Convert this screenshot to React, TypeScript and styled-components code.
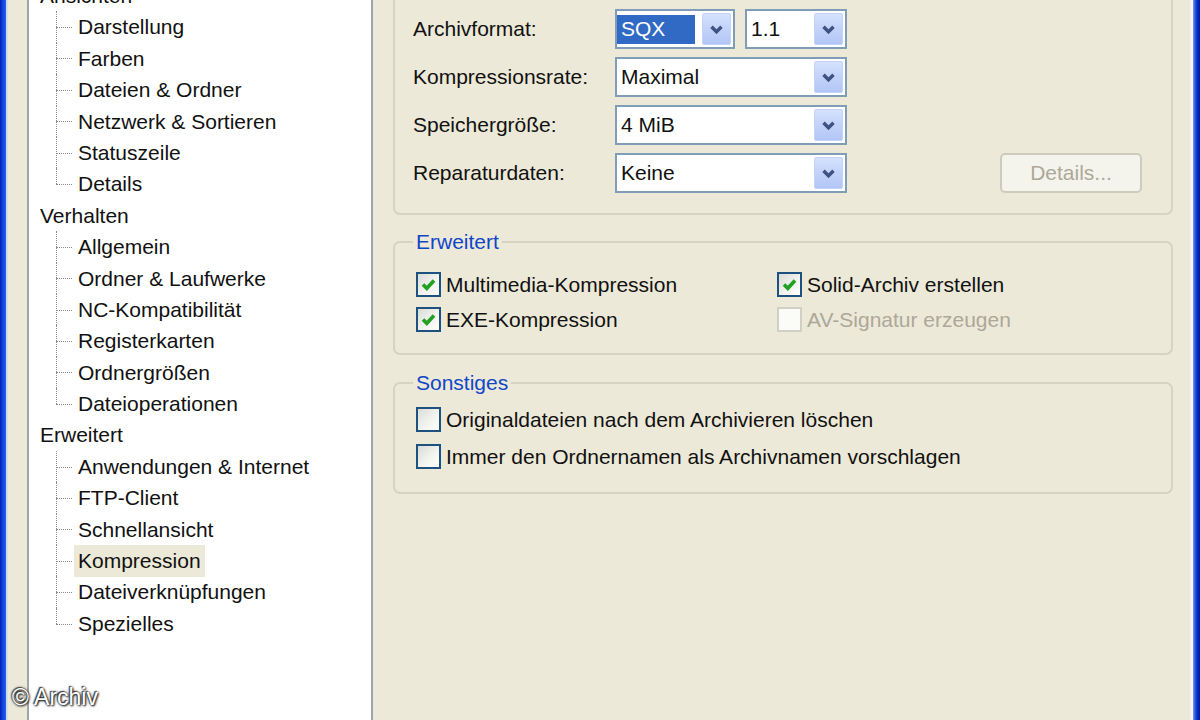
import React from "react";
import styled, { createGlobalStyle } from "styled-components";

const GlobalStyle = createGlobalStyle`
  html, body {
    margin: 0;
    padding: 0;
  }
  body {
    background: #ece9d8;
    font-family: "Liberation Sans", Arial, sans-serif;
  }
`;

const Window = styled.div`
  position: relative;
  display: flex;
  width: 1200px;
  height: 720px;
  overflow: hidden;
  background: #ece9d8;
  color: #111;
  font-size: 21px;
`;

const FrameEdge = styled.div<{ $side: "left" | "right" }>`
  flex: 0 0 ${(p) => (p.$side === "left" ? 8 : 10)}px;
  background: ${(p) =>
    p.$side === "left"
      ? "linear-gradient(to right, #0019b4 0, #0b3ad6 2px, #2462ea 6px, #c6d2f2 6px, #e2e2ea 8px)"
      : "linear-gradient(to right, #f3f1e4 0, #fbfaf4 3px, #7b9cf0 3px, #2a5ee6 5px, #0a30c8 7px, #001a98 10px)"};
`;

const TreeArea = styled.div`
  flex: 0 0 365px;
  box-sizing: border-box;
  padding-left: 19px;
  display: flex;
  flex-direction: column;
`;

const TreePanel = styled.div`
  flex: 1;
  width: 346px;
  box-sizing: border-box;
  margin: -10px 0;
  border: 2px solid #9ea5ad;
  background: #fff;
  overflow: hidden;
`;

const TreeList = styled.div`
  margin-top: -12px;
`;

const CategoryRow = styled.div`
  height: 31.4px;
  line-height: 31.4px;
  padding-left: 11px;
  white-space: nowrap;
`;

const ChildRow = styled.div<{ $last?: boolean }>`
  position: relative;
  height: 31.4px;
  line-height: 31.4px;
  padding-left: 45px;
  white-space: nowrap;

  &::before {
    content: "";
    position: absolute;
    left: 27px;
    top: 50%;
    width: 16px;
    border-top: 1px dotted #8a8a8a;
  }

  &::after {
    content: "";
    position: absolute;
    left: 27px;
    top: 0;
    height: ${(p) => (p.$last ? "50%" : "100%")};
    border-left: 1px dotted #8a8a8a;
  }
`;

const ChildLabel = styled.span<{ $selected?: boolean }>`
  display: inline-block;
  padding: 0 4px;
  line-height: 32px;
  background: ${(p) => (p.$selected ? "#ece9d8" : "transparent")};
`;

const Content = styled.div`
  flex: 1;
  box-sizing: border-box;
  padding: 0 17px 0 20px;
  display: flex;
  flex-direction: column;
`;

const Group = styled.fieldset<{ $mt: number }>`
  margin: ${(p) => p.$mt}px 0 0 0;
  padding: 0;
  min-width: 0;
  border: 2px solid #d6d3c4;
  border-radius: 7px;
`;

const Legend = styled.legend`
  margin-left: 18px;
  padding: 0 3px;
  color: #1046c8;
  font-size: 21px;
  line-height: 24px;
`;

const FormGrid = styled.div`
  display: grid;
  grid-template-columns: 202px 232px 1fr;
  grid-auto-rows: 40px;
  row-gap: 8px;
  align-items: center;
  padding: 27px 29px 20px 18px;
`;

const FieldLabel = styled.div`
  white-space: nowrap;
`;

const ComboPair = styled.div`
  display: flex;
  gap: 10px;
`;

const ComboBox = styled.div<{ $width: number }>`
  width: ${(p) => p.$width}px;
  height: 40px;
  box-sizing: border-box;
  display: flex;
  align-items: stretch;
  padding: 2px 2px 2px 0;
  border: 2px solid #7f9db9;
  background: #fff;
`;

const ComboValue = styled.div`
  flex: 1;
  display: flex;
  align-items: center;
  padding-left: 4px;
  white-space: nowrap;
`;

const SelectedValue = styled.span`
  display: inline-flex;
  align-items: center;
  width: 78px;
  height: 29px;
  box-sizing: border-box;
  margin-left: -4px;
  padding-left: 4px;
  background: #316ac5;
  color: #fff;
`;

const DropButton = styled.div`
  flex: 0 0 29px;
  box-sizing: border-box;
  display: flex;
  align-items: center;
  justify-content: center;
  border: 1px solid #c3d3fb;
  border-radius: 2px;
  background: linear-gradient(to bottom, #d6e2fd 0%, #c3d4fa 45%, #b2c6f5 100%);
`;

const DetailsButton = styled.div`
  grid-column: 3;
  justify-self: end;
  width: 142px;
  height: 40px;
  box-sizing: border-box;
  display: flex;
  align-items: center;
  justify-content: center;
  border: 2px solid #cdcbbe;
  border-radius: 5px;
  background: #f5f4ec;
  color: #aca899;
`;

const CheckGrid = styled.div<{ $rowHeight: number; $pt: number; $pb: number }>`
  display: grid;
  grid-template-columns: 361px 1fr;
  grid-auto-rows: ${(p) => p.$rowHeight}px;
  align-items: center;
  padding: ${(p) => p.$pt}px 0 ${(p) => p.$pb}px 21px;
`;

const CheckRow = styled.div<{ $span?: boolean; $disabled?: boolean }>`
  display: flex;
  align-items: center;
  gap: 5px;
  white-space: nowrap;
  grid-column: ${(p) => (p.$span ? "1 / -1" : "auto")};
  color: ${(p) => (p.$disabled ? "#aca899" : "#111")};
`;

const Box = styled.span<{ $disabled?: boolean }>`
  flex: 0 0 25px;
  height: 25px;
  box-sizing: border-box;
  display: flex;
  align-items: center;
  justify-content: center;
  border: 2px solid ${(p) => (p.$disabled ? "#d2d0c4" : "#1c5180")};
  background: ${(p) =>
    p.$disabled ? "#fbfbf8" : "linear-gradient(135deg, #dcdcd7 0%, #f2f2ee 55%, #ffffff 100%)"};
`;

const Watermark = styled.div`
  position: absolute;
  left: 12px;
  bottom: 9px;
  color: #fff;
  font-size: 23px;
  font-family: "Liberation Sans", Arial, sans-serif;
  text-shadow: 0 0 3px #222, 1px 1px 2px #111, -1px -1px 1px #444;
`;

const Chevron = () => (
  <svg width="13" height="9" viewBox="0 0 13 9">
    <polyline points="1.5,1.8 6.5,6.8 11.5,1.8" fill="none" stroke="#3f5281" strokeWidth="3.4" />
  </svg>
);

const Tick = () => (
  <svg width="17" height="17" viewBox="0 0 17 17">
    <polyline points="3,8.5 6.8,12.3 14,4.5" fill="none" stroke="#22a022" strokeWidth="3.6" />
  </svg>
);

const Combo = (props: { width: number; value: string; selected?: boolean }) => (
  <ComboBox $width={props.width}>
    <ComboValue>{props.selected ? <SelectedValue>{props.value}</SelectedValue> : props.value}</ComboValue>
    <DropButton>
      <Chevron />
    </DropButton>
  </ComboBox>
);

const Check = (props: { label: string; checked?: boolean; disabled?: boolean; span?: boolean }) => (
  <CheckRow $span={props.span} $disabled={props.disabled}>
    <Box $disabled={props.disabled}>{props.checked && <Tick />}</Box>
    {props.label}
  </CheckRow>
);

const tree = [
  {
    title: "Ansichten",
    items: ["Darstellung", "Farben", "Dateien & Ordner", "Netzwerk & Sortieren", "Statuszeile", "Details"],
  },
  {
    title: "Verhalten",
    items: ["Allgemein", "Ordner & Laufwerke", "NC-Kompatibilität", "Registerkarten", "Ordnergrößen", "Dateioperationen"],
  },
  {
    title: "Erweitert",
    items: ["Anwendungen & Internet", "FTP-Client", "Schnellansicht", "Kompression", "Dateiverknüpfungen", "Spezielles"],
  },
];

export default function App() {
  return (
    <Window>
      <GlobalStyle />
      <FrameEdge $side="left" />

      <TreeArea>
        <TreePanel>
          <TreeList>
            {tree.map((group) => (
              <React.Fragment key={group.title}>
                <CategoryRow>{group.title}</CategoryRow>
                {group.items.map((item, i) => (
                  <ChildRow key={item} $last={i === group.items.length - 1}>
                    <ChildLabel $selected={item === "Kompression"}>{item}</ChildLabel>
                  </ChildRow>
                ))}
              </React.Fragment>
            ))}
          </TreeList>
        </TreePanel>
      </TreeArea>

      <Content>
        <Group $mt={-20}>
          <FormGrid>
            <FieldLabel>Archivformat:</FieldLabel>
            <ComboPair>
              <Combo width={120} value="SQX" selected />
              <Combo width={102} value="1.1" />
            </ComboPair>
            <span />
            <FieldLabel>Kompressionsrate:</FieldLabel>
            <Combo width={232} value="Maximal" />
            <span />
            <FieldLabel>Speichergröße:</FieldLabel>
            <Combo width={232} value="4 MiB" />
            <span />
            <FieldLabel>Reparaturdaten:</FieldLabel>
            <Combo width={232} value="Keine" />
            <DetailsButton>Details...</DetailsButton>
          </FormGrid>
        </Group>

        <Group $mt={15}>
          <Legend>Erweitert</Legend>
          <CheckGrid $rowHeight={35} $pt={13} $pb={16}>
            <Check label="Multimedia-Kompression" checked />
            <Check label="Solid-Archiv erstellen" checked />
            <Check label="EXE-Kompression" checked />
            <Check label="AV-Signatur erzeugen" disabled />
          </CheckGrid>
        </Group>

        <Group $mt={16}>
          <Legend>Sonstiges</Legend>
          <CheckGrid $rowHeight={37} $pt={6} $pb={17}>
            <Check label="Originaldateien nach dem Archivieren löschen" span />
            <Check label="Immer den Ordnernamen als Archivnamen vorschlagen" span />
          </CheckGrid>
        </Group>
      </Content>

      <FrameEdge $side="right" />
      <Watermark>© Archiv</Watermark>
    </Window>
  );
}
